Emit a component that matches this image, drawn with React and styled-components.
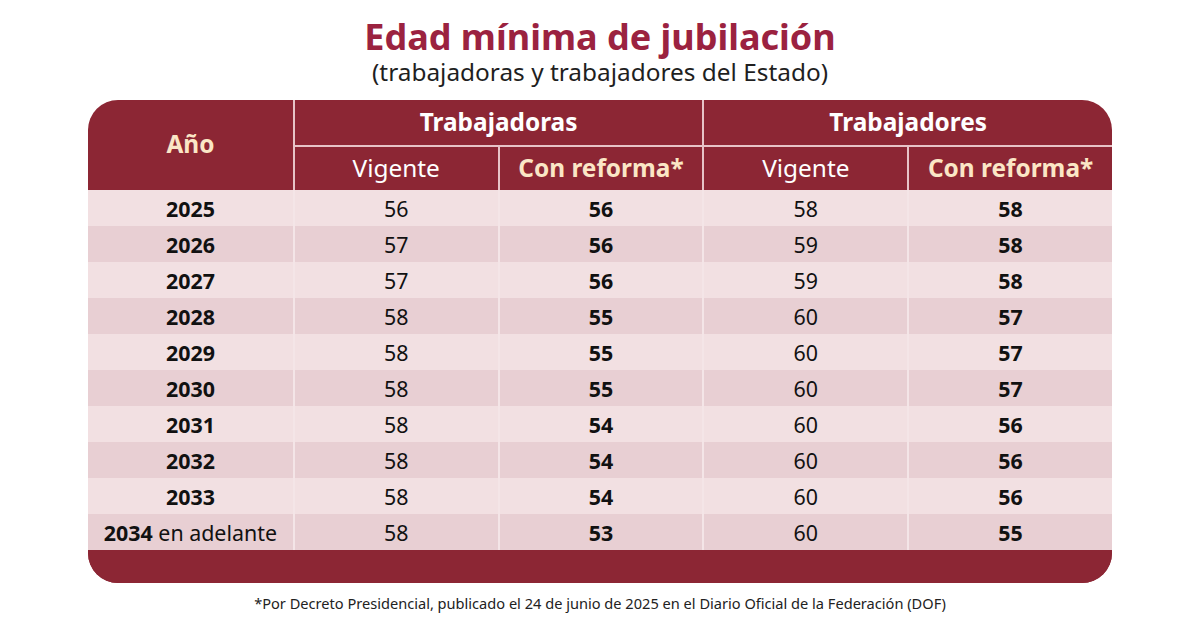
import styled, { createGlobalStyle } from "styled-components";

const GlobalStyle = createGlobalStyle`
  html, body {
    margin: 0;
    padding: 0;
    background: #ffffff;
  }
  body {
    font-family: "Noto Sans", "Open Sans", sans-serif;
    color: #1a1a1a;
  }
`;

const Page = styled.div`
  width: 1200px;
  height: 628px;
  display: flex;
  flex-direction: column;
  align-items: center;
  padding-top: 16px;
  box-sizing: border-box;
`;

const Title = styled.h1`
  margin: 0;
  font-size: 36px;
  line-height: 42px;
  font-weight: 700;
  color: #9b2240;
`;

const Subtitle = styled.h2`
  margin: 0;
  font-size: 24.4px;
  line-height: 28px;
  font-weight: 400;
  color: #1f1f1f;
`;

const Table = styled.div`
  margin-top: 14px;
  width: 1024px;
  display: grid;
  grid-template-columns: repeat(5, 1fr);
  grid-template-rows: 45px 45px repeat(10, 36px) 33px;
  border-radius: 30px;
  overflow: hidden;
  background: #8c2634;
`;

const HeadCell = styled.div`
  display: flex;
  align-items: center;
  justify-content: center;
  grid-column: ${(p) => p.$col} / span ${(p) => p.$span || 1};
  grid-row: ${(p) => p.$row} / span ${(p) => p.$rows || 1};
  font-size: 24.4px;
  font-weight: ${(p) => (p.$light ? 400 : 700)};
  color: ${(p) => (p.$accent ? "#fbe6c6" : "#ffffff")};
  border-left: ${(p) => (p.$col > 1 ? "2px solid #e7c3c7" : "none")};
  border-top: ${(p) => (p.$row > 1 ? "2px solid #e7c3c7" : "none")};
  padding-bottom: 3px;
  box-sizing: border-box;
`;

const Cell = styled.div`
  display: flex;
  align-items: center;
  justify-content: center;
  font-size: 21.4px;
  font-weight: ${(p) => (p.$bold ? 700 : 400)};
  color: #111111;
  background: ${(p) => (p.$even ? "#e8cfd3" : "#f2e0e2")};
  border-left: ${(p) => (p.$first ? "none" : "2px solid #f4e5e7")};
  white-space: nowrap;

  b {
    font-weight: 700;
  }
`;

const FooterBand = styled.div`
  grid-column: 1 / -1;
  background: #8c2634;
`;

const Footnote = styled.p`
  margin: 10px 0 0;
  font-size: 14.6px;
  line-height: 20px;
  color: #222222;
`;

const rows = [
  ["2025", 56, 56, 58, 58],
  ["2026", 57, 56, 59, 58],
  ["2027", 57, 56, 59, 58],
  ["2028", 58, 55, 60, 57],
  ["2029", 58, 55, 60, 57],
  ["2030", 58, 55, 60, 57],
  ["2031", 58, 54, 60, 56],
  ["2032", 58, 54, 60, 56],
  ["2033", 58, 54, 60, 56],
  ["2034", 58, 53, 60, 55, true],
];

function App() {
  return (
    <>
      <GlobalStyle />
      <Page>
        <Title>Edad mínima de jubilación</Title>
        <Subtitle>(trabajadoras y trabajadores del Estado)</Subtitle>
        <Table>
          <HeadCell $col={1} $row={1} $rows={2} $accent>
            Año
          </HeadCell>
          <HeadCell $col={2} $row={1} $span={2}>
            Trabajadoras
          </HeadCell>
          <HeadCell $col={4} $row={1} $span={2}>
            Trabajadores
          </HeadCell>
          <HeadCell $col={2} $row={2} $light>
            Vigente
          </HeadCell>
          <HeadCell $col={3} $row={2} $accent>
            Con reforma*
          </HeadCell>
          <HeadCell $col={4} $row={2} $light>
            Vigente
          </HeadCell>
          <HeadCell $col={5} $row={2} $accent>
            Con reforma*
          </HeadCell>

          {rows.map(([year, a, b, c, d, last], i) => {
            const even = i % 2 === 1;
            return [
              <Cell key={year + "y"} $first $even={even} $bold={!last}>
                {last ? (
                  <span>
                    <b>{year}</b> en adelante
                  </span>
                ) : (
                  year
                )}
              </Cell>,
              <Cell key={year + "a"} $even={even}>{a}</Cell>,
              <Cell key={year + "b"} $even={even} $bold>{b}</Cell>,
              <Cell key={year + "c"} $even={even}>{c}</Cell>,
              <Cell key={year + "d"} $even={even} $bold>{d}</Cell>,
            ];
          })}

          <FooterBand />
        </Table>
        <Footnote>
          *Por Decreto Presidencial, publicado el 24 de junio de 2025 en el
          Diario Oficial de la Federación (DOF)
        </Footnote>
      </Page>
    </>
  );
}

export default App;
